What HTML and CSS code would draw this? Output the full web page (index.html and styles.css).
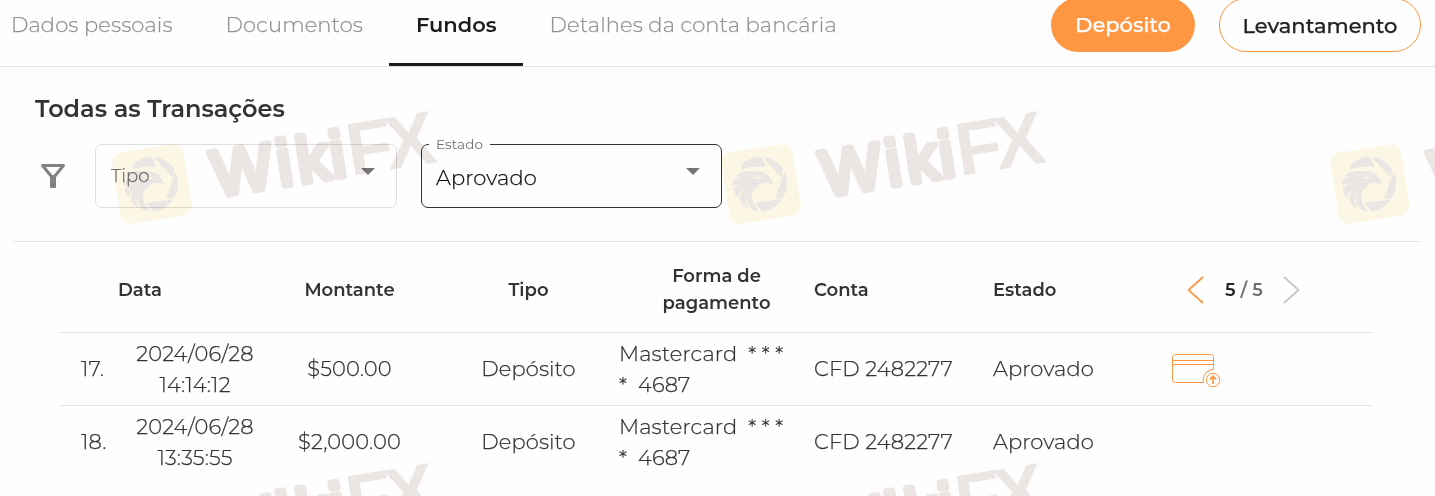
FILE: index.html
```
<!DOCTYPE html>
<html lang="pt">
<head>
    <meta charset="UTF-8">
    <meta name="viewport" content="width=device-width, initial-scale=1.0">
    <title>Fundos</title>
    <link rel="stylesheet" href="styles.css">
</head>

<body>
    <header class="topo">
        <nav class="abas">
            <a class="aba" href="#">Dados pessoais</a>
            <a class="aba" href="#">Documentos</a>
            <a class="aba ativa" href="#">Fundos</a>
            <a class="aba" href="#">Detalhes da conta bancária</a>
        </nav>
        <div class="botoes">
            <button class="botao cheio">Depósito</button>
            <button class="botao vazio">Levantamento</button>
        </div>
    </header>

    <section class="filtros">
        <h1>Todas as Transações</h1>
        <div class="linha-filtros">
            <svg class="funil" viewBox="0 0 26 26">
                <path d="M2.500 2.500H23.500L14.500 13.500H11.500Z" fill="none" stroke="#808085" stroke-width="3" stroke-linejoin="round"/>
                <path d="M10 12H16V24Q16 25 15 25H11Q10 25 10 24Z" fill="#808085"/>
            </svg>
            <div class="campo">
                <span class="dica">Tipo</span>
                <span class="seta"></span>
            </div>
            <div class="campo marcado">
                <span class="rotulo">Estado</span>
                <span class="valor">Aprovado</span>
                <span class="seta"></span>
            </div>
        </div>
    </section>

    <main class="tabela">
        <div class="linha cabeca">
            <div></div>
            <div>Data</div>
            <div class="meio">Montante</div>
            <div class="meio tipo">Tipo</div>
            <div class="forma">Forma de pagamento</div>
            <div>Conta</div>
            <div>Estado</div>
            <div class="paginas">
                <svg viewBox="0 0 17 28"><path d="M16 1L1.500 14L16 27" fill="none" stroke="#ff9641" stroke-width="1.700"/></svg>
                <span class="num"><b>5</b> / 5</span>
                <svg viewBox="0 0 17 28"><path d="M1 1L15.500 14L1 27" fill="none" stroke="#c4c4c4" stroke-width="1.700"/></svg>
            </div>
        </div>
        <div class="linha">
            <div class="ordem">17.</div>
            <div class="meio">2024/06/28<br>14:14:12</div>
            <div class="meio">$500.00</div>
            <div class="meio tipo">Depósito</div>
            <div class="cartao">Mastercard &nbsp;* * *<br>* &nbsp;4687</div>
            <div>CFD 2482277</div>
            <div>Aprovado</div>
            <div class="acao">
                <svg viewBox="0 0 50 36" fill="none" stroke="#ff9641">
                    <path d="M32 30.500H3.500Q.500 30.500 .500 27.500V5.500Q.500 2.500 3.500 2.500H38.500Q41.500 2.500 41.500 5.500V17.500A10.500 10.500 0 0 0 31.500 30.500"/>
                    <path d="M.500 8.500H42M.500 12.500H42"/>
                    <circle cx="41" cy="28" r="6.700"/>
                    <path d="M41 32V24.500M37.800 27.500L41 24.300L44.200 27.500" stroke-width="1.700"/>
                </svg>
            </div>
        </div>
        <div class="linha">
            <div class="ordem">18.</div>
            <div class="meio">2024/06/28<br>13:35:55</div>
            <div class="meio">$2,000.00</div>
            <div class="meio tipo">Depósito</div>
            <div class="cartao">Mastercard &nbsp;* * *<br>* &nbsp;4687</div>
            <div>CFD 2482277</div>
            <div>Aprovado</div>
            <div></div>
        </div>
    </main>

    <!-- marca de agua por cima da pagina -->
    <svg class="marca" viewBox="0 0 1435 496">
        <defs>
            <g id="wikifx">
                <rect x="-36" y="-36" width="72" height="72" rx="10" fill="#fdf7e5" transform="translate(152 184) rotate(-9)"/>
                <!-- aguia dentro das laminas -->
                <g fill="#ece6e4" transform="translate(107 136) scale(.3333)">
                    <path d="M76 87Q98 64 134 62L149 92Q110 89 76 99Z"/>
                    <path d="M140 62Q178 66 201 98L197 125Z"/>
                    <path d="M206 107Q224 148 199 187L177 188Z"/>
                    <path d="M117 200L198 190Q175 225 139 226Z"/>
                    <path d="M60 120Q78 102 112 106Q150 102 162 127Q171 134 169 148Q160 139 148 141Q130 139 126 149L146 151Q120 150 110 168Q100 192 129 226Q113 225 105 220Q91 200 92 178Q85 198 97 217Q78 207 72 193Q70 180 80 163Q66 172 67 188Q54 172 53 158Q62 146 73 141Q60 143 51 150Q49 141 52 133Q61 127 74 125Q64 122 60 120Z"/>
                    <path d="M109 122Q122 132 139 127Q130 120 109 122Z" fill="#fdf7e5"/>
                </g>
                <g class="letras" transform="translate(356.700 175) rotate(-9)">
                    <text class="wiki" x="-142.500 -77 -57 -23" y="-1">Wiki</text>
                    <text class="fx" x="-6 33" y="0">FX</text>
                </g>
            </g>
        </defs>
        <use href="#wikifx"/>
        <use href="#wikifx" x="609"/>
        <use href="#wikifx" x="1218"/>
        <use href="#wikifx" y="352"/>
        <use href="#wikifx" x="609" y="352"/>
    </svg>
</body>
</html>
```
FILE: styles.css
```
*{
    box-sizing: border-box;
}

body{
    margin: 0;
    height: 496px;
    overflow: hidden;
    position: relative;
    background: #fefefe;
    font-family: Montserrat, Inter, sans-serif;
    font-size: 21px;
    font-weight: 300;
    letter-spacing: 0.13px;
    -webkit-text-stroke: 0.25px;
    color: #333;
}

.topo{
    display: flex;
    justify-content: space-between;
    height: 67px;
    border-bottom: 1px solid #e3e3e3;
}

.abas{
    display: flex;
}

.aba{
    height: 66px;
    padding: 0 26.5px;
    line-height: 50px;
    color: #929292;
    text-decoration: none;
    white-space: nowrap;
}

.aba:first-child{
    padding-left: 11px;
}

.ativa{
    color: #1c1c1c;
    font-weight: 600;
    letter-spacing: 0;
    -webkit-text-stroke: 0;
    border-bottom: 3px solid #1c1c1c;
}

.botoes{
    display: flex;
    gap: 24px;
    padding-right: 14px;
}

.botao{
    height: 54px;
    margin-top: -2px;
    padding: 0;
    border-radius: 27px;
    font-family: inherit;
    font-size: 21px;
    font-weight: 500;
    line-height: 50px;
}

.cheio{
    width: 144px;
    border: none;
    background: #ff9641;
    color: #fff;
}

.vazio{
    width: 202px;
    padding-top: 1px;
    border: 1px solid #ff9641;
    background: #fefefe;
    color: #222;
}

.filtros{
    height: 175px;
    margin: 0 15px 0 13px;
    padding: 24px 0 0 22px;
    border-bottom: 1px solid #e3e3e3;
}

h1{
    margin: 0;
    font-size: 24px;
    line-height: 36px;
    font-weight: 600;
    letter-spacing: 0;
    -webkit-text-stroke: 0;
}

.linha-filtros{
    display: flex;
    align-items: center;
    padding-top: 17px;
}

.funil{
    width: 26px;
    height: 26px;
    margin: 0 29px 0 5px;
}

.campo{
    display: flex;
    align-items: center;
    justify-content: space-between;
    position: relative;
    width: 302px;
    height: 64px;
    margin-right: 24px;
    padding: 0 21px 0 15px;
    border: 1px solid #dedede;
    border-radius: 7px;
}

.marcado{
    width: 301px;
    padding-left: 14px;
    border-color: #333;
    color: #111;
}

.dica{
    font-size: 18px;
    color: #707070;
}

.valor{
    padding-top: 3px;
}

.rotulo{
    position: absolute;
    top: -10px;
    left: 7px;
    padding: 0 7px;
    background: #fefefe;
    font-size: 13.5px;
    line-height: 19px;
    font-weight: 400;
    -webkit-text-stroke: 0;
    color: #707078;
}

.seta{
    border: 7px solid transparent;
    border-top-color: #757575;
    border-bottom: none;
    margin-bottom: 10px;
}

.tabela{
    margin: 0 62px 0 59px;
}

.linha{
    display: grid;
    grid-template-columns: 59px 154px 155px 192px 195px 179px 179px 1fr;
    align-items: center;
    height: 73px;
    padding-bottom: 1px;
    line-height: 31px;
    border-bottom: 1px solid #e3e3e3;
}

.linha:last-child{
    height: 72px;
    border-bottom: none;
}

.cabeca{
    height: 91px;
    padding: 6px 0 0;
    font-size: 18px;
    line-height: 27px;
    font-weight: 600;
    letter-spacing: 0;
    -webkit-text-stroke: 0;
}

.meio{
    text-align: center;
}

.tipo{
    padding-left: 11px;
}

.ordem{
    padding-left: 22px;
}

.forma{
    padding: 0 38px;
    text-align: center;
}

.cartao{
    white-space: nowrap;
}

.paginas{
    display: flex;
    align-items: center;
    padding-left: 15px;
}

.paginas svg{
    width: 17px;
    height: 28px;
    margin-bottom: 1px;
}

.num{
    width: 39px;
    margin: 0 19px 0 21px;
    white-space: nowrap;
    color: #707070;
}

.num b{
    font-weight: 600;
    color: #222;
}

.acao svg{
    display: block;
    width: 50px;
    height: 36px;
    margin-top: 2px;
}

.marca{
    position: absolute;
    top: 0;
    left: 0;
    width: 1435px;
    height: 496px;
    mix-blend-mode: multiply;
    pointer-events: none;
    letter-spacing: 0;
    -webkit-text-stroke: 0;
}

.letras{
    font-family: "Liberation Sans", Arial, sans-serif;
    font-weight: 400;
    fill: #ece6e4;
}

.wiki{
    font-size: 64px;
    stroke: #ece6e4;
    stroke-width: 6.5px;
    stroke-linejoin: round;
}

.fx{
    font-size: 75px;
    font-weight: 700;
}
```
